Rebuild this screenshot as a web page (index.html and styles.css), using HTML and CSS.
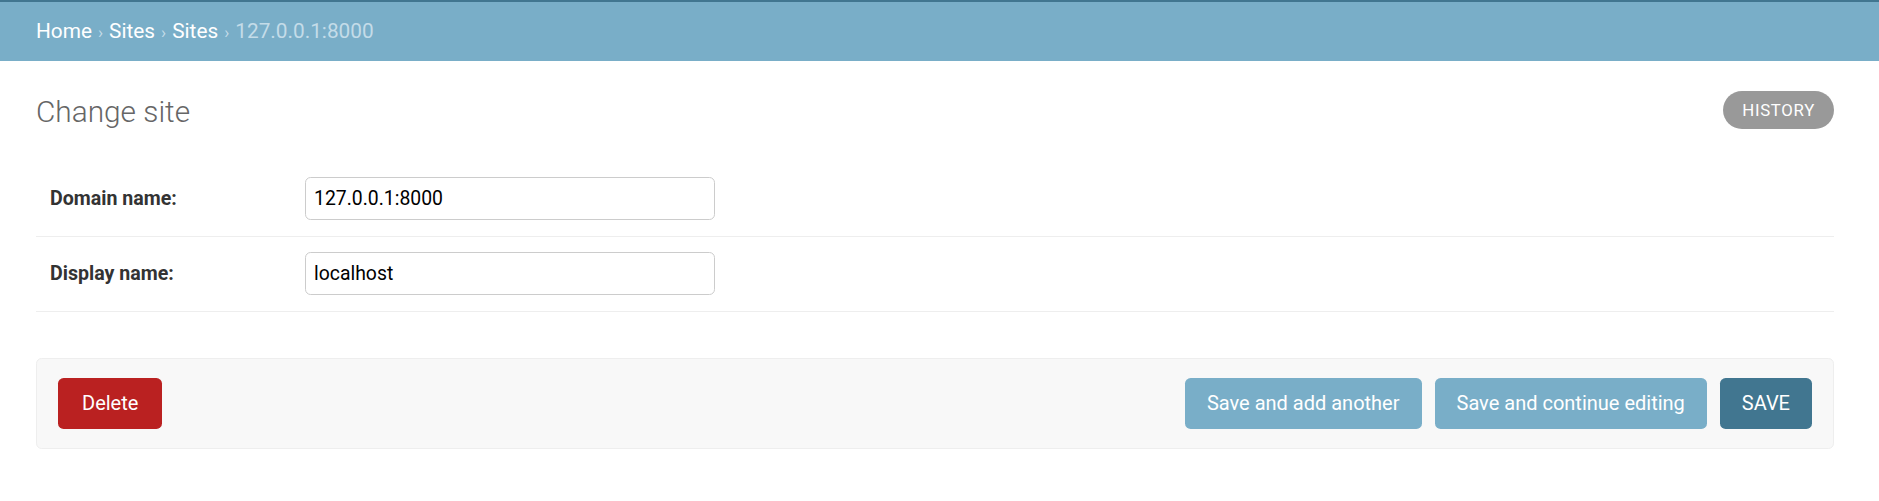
FILE: index.html
```html
<!DOCTYPE html>
<html lang="en">
<head>
<meta charset="utf-8">
<title>Change site | Django site admin</title>
<link rel="stylesheet" href="styles.css">
</head>
<body>
  <div class="header-edge"></div>
  <nav class="breadcrumbs">
    <a href="#">Home</a>
    <span class="sep">›</span>
    <a href="#">Sites</a>
    <span class="sep">›</span>
    <a href="#">Sites</a>
    <span class="sep">›</span>
    <span class="current">127.0.0.1:8000</span>
  </nav>

  <main class="content">
    <div class="title-row">
      <h1 class="title">Change site</h1>
      <a class="history-link" href="#">History</a>
    </div>

    <form class="change-form">
      <fieldset class="module">
        <div class="form-row">
          <label class="field-label" for="id_domain">Domain name:</label>
          <input class="text-field" id="id_domain" type="text" value="127.0.0.1:8000">
        </div>
        <div class="form-row">
          <label class="field-label" for="id_name">Display name:</label>
          <input class="text-field" id="id_name" type="text" value="localhost">
        </div>
      </fieldset>

      <div class="submit-row">
        <a class="btn btn-delete" href="#">Delete</a>
        <div class="save-actions">
          <button class="btn btn-secondary" type="button">Save and add another</button>
          <button class="btn btn-secondary" type="button">Save and continue editing</button>
          <button class="btn btn-primary" type="button">SAVE</button>
        </div>
      </div>
    </form>
  </main>
</body>
</html>
```

FILE: styles.css
```css
html, body {
  margin: 0;
  padding: 0;
  background: #fff;
}

body {
  font-family: Roboto, "Liberation Sans", Arial, sans-serif;
  font-size: 19.6px;
  color: #333;
}

/* dark strip left over from the site header */
.header-edge {
  height: 2px;
  background: #417690;
}

.breadcrumbs {
  background: #79aec8;
  color: #c4dce8;
  padding: 14px 36px;
  line-height: 30px;
  font-size: 20.8px;
  display: flex;
  align-items: baseline;
  gap: 6px;
}

.breadcrumbs a {
  color: #fff;
  text-decoration: none;
}

.breadcrumbs .sep {
  color: #c4dce8;
  font-size: 17px;
}

.content {
  padding: 28px 45px 0 36px;
}

.title-row {
  display: flex;
  justify-content: space-between;
  align-items: flex-start;
}

.title {
  margin: 0;
  font-size: 29.8px;
  font-weight: 300;
  line-height: 45px;
  color: #666;
}

.history-link {
  margin-top: 2px;
  height: 38px;
  line-height: 38px;
  padding: 0 19px 0 19.5px;
  border-radius: 19px;
  background: #999;
  color: #fff;
  text-decoration: none;
  text-transform: uppercase;
  font-size: 16.8px;
  letter-spacing: 0.7px;
}

.change-form {
  margin-top: 28px;
}

.module {
  margin: 0;
  padding: 0;
  border: 0;
}

.form-row {
  display: flex;
  align-items: center;
  padding: 15px 14px 16px;
  border-bottom: 1px solid #eee;
}

.field-label {
  width: 255px;
  flex: none;
  font-weight: 700;
  font-size: 19.6px;
  color: #333;
}

.text-field {
  box-sizing: border-box;
  width: 410px;
  height: 43px;
  padding: 0 8px;
  border: 1.4px solid #ccc;
  border-radius: 5.6px;
  font-family: Roboto, "Liberation Sans", Arial, sans-serif;
  font-size: 19.4px;
  color: #000;
  background: #fff;
}

.submit-row {
  margin-top: 46px;
  display: flex;
  justify-content: space-between;
  align-items: center;
  padding: 19px 21px;
  background: #f8f8f8;
  border: 1px solid #eee;
  border-radius: 5.6px;
}

.save-actions {
  display: flex;
  gap: 13px;
}

.btn {
  box-sizing: border-box;
  height: 51px;
  padding: 0 22px;
  border: 0;
  border-radius: 5.6px;
  font-family: Roboto, "Liberation Sans", Arial, sans-serif;
  font-size: 20px;
  line-height: 51px;
  color: #fff;
  text-decoration: none;
  cursor: pointer;
}

.btn-delete {
  background: #ba2121;
  padding: 0 24px;
}

.btn-secondary {
  background: #79aec8;
}

.btn-primary {
  background: #417690;
}
```
